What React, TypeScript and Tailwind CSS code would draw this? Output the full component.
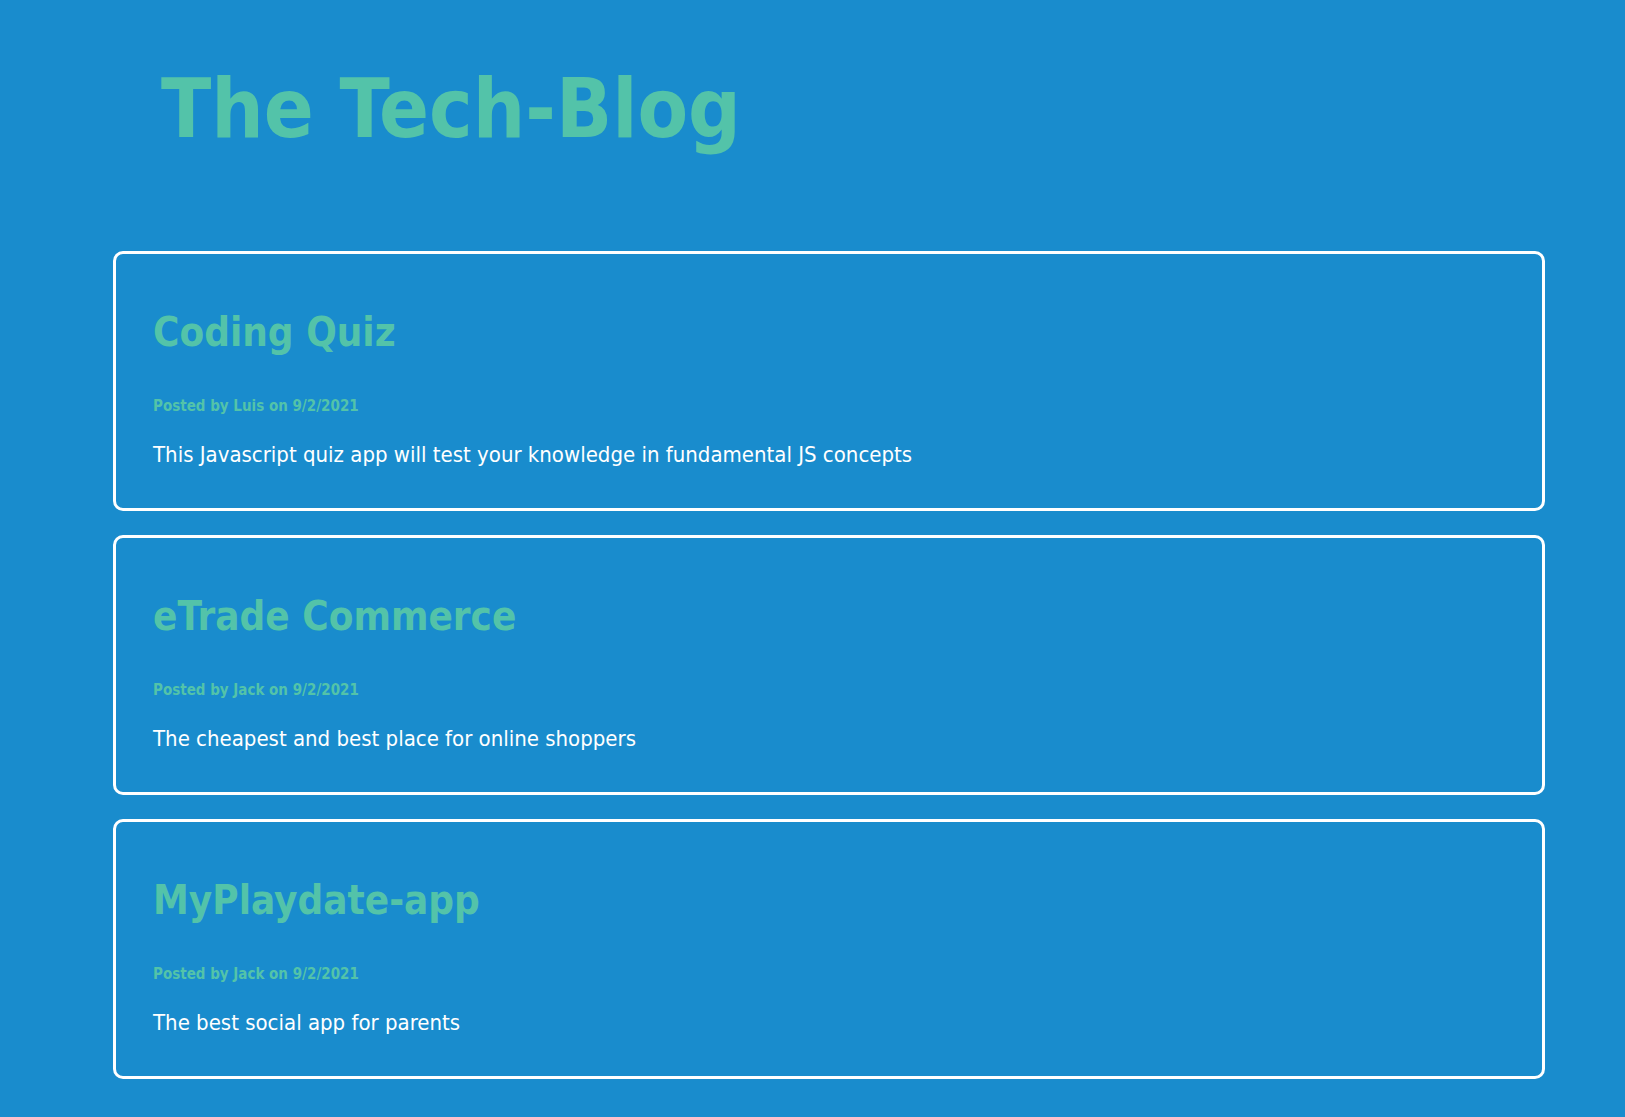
import React from 'react';

const posts = [
  {
    title: 'Coding Quiz',
    author: 'Luis',
    date: '9/2/2021',
    body: 'This Javascript quiz app will test your knowledge in fundamental JS concepts',
  },
  {
    title: 'eTrade Commerce',
    author: 'Jack',
    date: '9/2/2021',
    body: 'The cheapest and best place for online shoppers',
  },
  {
    title: 'MyPlaydate-app',
    author: 'Jack',
    date: '9/2/2021',
    body: 'The best social app for parents',
  },
];

export default function App() {
  return (
    <div className="min-h-[1117px] bg-[#198ccd] font-['DejaVu_Sans_Condensed','DejaVu_Sans',sans-serif]">
      <header className="pl-[161px] pt-[47px] pb-[81px]">
        <h1 className="text-[82px] font-bold leading-[1.5] text-[#53c3a9]">The Tech-Blog</h1>
      </header>

      <main className="ml-[113px] w-[1432px] flex flex-col gap-[24px]">
        {posts.map((post) => (
          <article
            key={post.title}
            className="h-[260px] rounded-[10px] border-[3px] border-white px-[37px] pt-[54px]"
          >
            <h2 className="text-[40px] font-bold leading-[1.2] text-[#53c3a9]">{post.title}</h2>
            <p className="mt-[39px] text-[15px] font-bold text-[#53c3a9]">
              Posted by {post.author} on {post.date}
            </p>
            <p className="mt-[20px] text-[22px] text-white">{post.body}</p>
          </article>
        ))}
      </main>
    </div>
  );
}
